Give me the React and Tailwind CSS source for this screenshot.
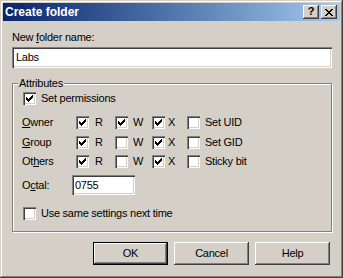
const FONT = { fontFamily: '"Liberation Sans", Arial, sans-serif' };

function Check() {
  return (
    <svg width="7" height="7" viewBox="0 0 7 7" shapeRendering="crispEdges" className="block">
      <path
        fill="#000"
        d="M6 0h1v1h-1z M5 1h2v1h-2z M0 2h1v1h-1z M4 2h3v1h-3z M0 3h2v1h-2z M3 3h3v1h-3z M0 4h5v1h-5z M1 5h3v1h-3z M2 6h1v1h-1z"
      />
    </svg>
  );
}

function Box({ checked }) {
  return (
    <span className="w-[13px] h-[13px] shrink-0 bg-white flex items-center justify-center shadow-[inset_1px_1px_#808080,inset_2px_2px_#404040,inset_-1px_-1px_#ffffff,inset_-2px_-2px_#d4d0c8]">
      {checked && <Check />}
    </span>
  );
}

function CheckItem({ checked, children, gap = 'ml-[5px]' }) {
  return (
    <div className="flex items-center h-[13px]">
      <Box checked={checked} />
      <span className={`${gap} text-[11px] leading-[13px] text-black whitespace-nowrap`}>{children}</span>
    </div>
  );
}

function PermRow({ label, r, w, x, extra }) {
  return (
    <div className="grid grid-cols-[53px_39px_37px_35px_auto] items-center h-[13px]">
      <span className="text-[11px] leading-[13px] -ml-[1px]">{label}</span>
      <CheckItem checked={r} gap="ml-[6px]">R</CheckItem>
      <CheckItem checked={w} gap="ml-[5px]">W</CheckItem>
      <CheckItem checked={x} gap="ml-[3px]">X</CheckItem>
      <CheckItem checked={false} gap="ml-[5px]">{extra}</CheckItem>
    </div>
  );
}

function CloseGlyph() {
  return (
    <svg width="8" height="7" viewBox="0 0 8 7" shapeRendering="crispEdges" className="block">
      <path
        fill="#000"
        d="M0 0h2v1h-2z M6 0h2v1h-2z M1 1h2v1h-2z M5 1h2v1h-2z M2 2h4v1h-4z M3 3h2v1h-2z M2 4h4v1h-4z M1 5h2v1h-2z M5 5h2v1h-2z M0 6h2v1h-2z M6 6h2v1h-2z"
      />
    </svg>
  );
}

const RAISED =
  'bg-[#d4d0c8] shadow-[inset_-1px_-1px_#404040,inset_1px_1px_#ffffff,inset_-2px_-2px_#808080,inset_2px_2px_#d4d0c8]';
const SUNKEN =
  'bg-white shadow-[inset_1px_1px_#808080,inset_2px_2px_#404040,inset_-1px_-1px_#ffffff,inset_-2px_-2px_#d4d0c8]';

function Button({ children, isDefault }) {
  return (
    <div
      className={`w-[75px] h-[23px] flex items-center justify-center text-[11px] text-black ${
        isDefault
          ? 'border border-black bg-[#d4d0c8] shadow-[inset_-1px_-1px_#404040,inset_1px_1px_#ffffff,inset_-2px_-2px_#808080]'
          : RAISED
      }`}
    >
      {children}
    </div>
  );
}

export default function App() {
  return (
    <div
      className="w-[343px] h-[278px] bg-[#d4d0c8] p-[3px] flex flex-col shadow-[inset_-1px_-1px_#404040,inset_1px_1px_#d4d0c8,inset_-2px_-2px_#808080,inset_2px_2px_#ffffff]"
      style={FONT}
    >
      {/* title bar */}
      <div className="h-[18px] shrink-0 bg-linear-to-r from-[#0a246a] to-[#a6caf0] flex items-center justify-between pl-[2px] pr-[3px]">
        <span className="text-white font-bold text-[12px] leading-[14px]">Create folder</span>
        <div className="flex gap-[2px]">
          <div className={`w-[16px] h-[14px] flex items-center justify-center ${RAISED}`}>
            <span className="text-[11px] font-bold leading-none text-black -mt-[1px]">?</span>
          </div>
          <div className={`w-[16px] h-[14px] flex items-center justify-center ${RAISED}`}>
            <CloseGlyph />
          </div>
        </div>
      </div>

      {/* body */}
      <div className="flex flex-col pl-[9px] pr-[8px] pt-[10px] text-black tracking-[-0.25px]">
        <span className="text-[11px] leading-[13px]">
          New <u>f</u>older name:
        </span>
        <div className={`mt-[3px] h-[21px] flex items-center pl-[4px] text-[11px] ${SUNKEN}`}>Labs</div>

        {/* group */}
        <div className="relative mt-[15px] h-[149px] border border-[#808080] shadow-[inset_1px_1px_#ffffff,1px_1px_#ffffff] pl-[10px] pt-[8px] flex flex-col">
          <span className="absolute -top-[7px] left-[5px] bg-[#d4d0c8] px-[1px] text-[11px] leading-[13px]">
            Attributes
          </span>
          <CheckItem checked>Set permissions</CheckItem>
          <div className="mt-[11px]">
            <PermRow label={<><u>O</u>wner</>} r w x extra="Set UID" />
          </div>
          <div className="mt-[7px]">
            <PermRow label={<><u>G</u>roup</>} r x extra="Set GID" />
          </div>
          <div className="mt-[6px]">
            <PermRow label={<>Ot<u>h</u>ers</>} r x extra="Sticky bit" />
          </div>
          <div className="mt-[7px] flex items-center h-[20px]">
            <span className="w-[50px] text-[11px] leading-[13px] -ml-[1px]">
              O<u>c</u>tal:
            </span>
            <div className={`w-[63px] h-[20px] flex items-center pl-[3px] text-[11px] ${SUNKEN}`}>0755</div>
          </div>
          <div className="mt-[12px]">
            <CheckItem checked={false}>Use same settings next time</CheckItem>
          </div>
        </div>

        {/* buttons */}
        <div className="mt-[10px] flex justify-end gap-[6px] pr-[2px]">
          <Button isDefault>OK</Button>
          <Button>Cancel</Button>
          <Button>Help</Button>
        </div>
      </div>
    </div>
  );
}
